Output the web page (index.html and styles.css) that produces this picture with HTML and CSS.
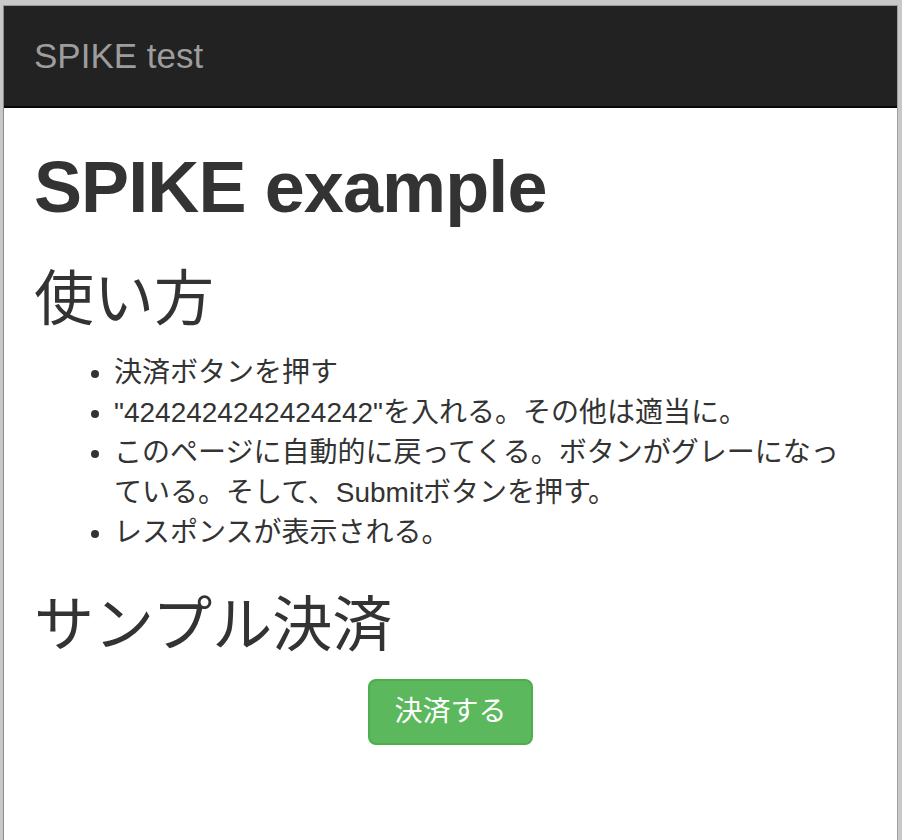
FILE: index.html
```html
<!DOCTYPE html>
<html lang="ja">
<head>
<meta charset="utf-8">
<title>SPIKE test</title>
<link rel="stylesheet" href="styles.css">
</head>
<body>
<div class="frame">
  <div class="window">
    <nav class="navbar">
      <a class="brand" href="#">SPIKE test</a>
    </nav>
    <div class="container">
      <h1>SPIKE example</h1>
      <h2>使い方</h2>
      <ul class="steps">
        <li>決済ボタンを押す</li>
        <li>"4242424242424242"を入れる。その他は適当に。</li>
        <li>このページに自動的に戻ってくる。ボタンがグレーになっている。そして、Submitボタンを押す。</li>
        <li>レスポンスが表示される。</li>
      </ul>
      <h2>サンプル決済</h2>
      <div class="pay">
        <button class="btn-success" type="button">決済する</button>
      </div>
    </div>
  </div>
</div>
</body>
</html>
```
FILE: styles.css
```css
html, body {
  margin: 0;
  padding: 0;
}
body {
  font-family: "Liberation Sans", "Noto Sans CJK JP", sans-serif;
  color: #333;
  background: #c6c6c6;
}
.frame {
  box-sizing: border-box;
  min-height: 840px;
  padding: 5px 4px 0 3px;
  background: #c8c8c8;
}
.window {
  box-sizing: border-box;
  min-height: 835px;
  background: #fff;
  border-top: 1px solid #9a9a9a;
  border-left: 1px solid #8a8a8a;
  border-right: 1px solid #a0a0a0;
}
.navbar {
  height: 100px;
  background: #222;
  border-bottom: 2px solid #080808;
  display: flex;
  align-items: center;
  padding: 0 30px;
}
.brand {
  font-size: 35px;
  line-height: 40px;
  color: #9d9d9d;
  text-decoration: none;
}
.container {
  padding: 0 30px;
}
h1 {
  font-size: 72px;
  line-height: 1.1;
  font-weight: 700;
  letter-spacing: -0.9px;
  margin: 40px 0 20px;
}
h2 {
  font-size: 60px;
  line-height: 1.1;
  font-weight: 400;
  margin: 40px 0 20px;
}
.steps {
  margin: 0 0 20px;
  padding: 0 12px 0 80px;
  font-size: 28px;
  line-height: 40px;
}
.pay {
  display: flex;
  justify-content: center;
}
.btn-success {
  font-family: "Liberation Sans", "Noto Sans CJK JP", sans-serif;
  font-size: 28px;
  line-height: 40px;
  padding: 11px 24px;
  color: #fff;
  background: #5cb85c;
  border: 2px solid #4cae4c;
  border-radius: 8px;
  cursor: pointer;
}
```
